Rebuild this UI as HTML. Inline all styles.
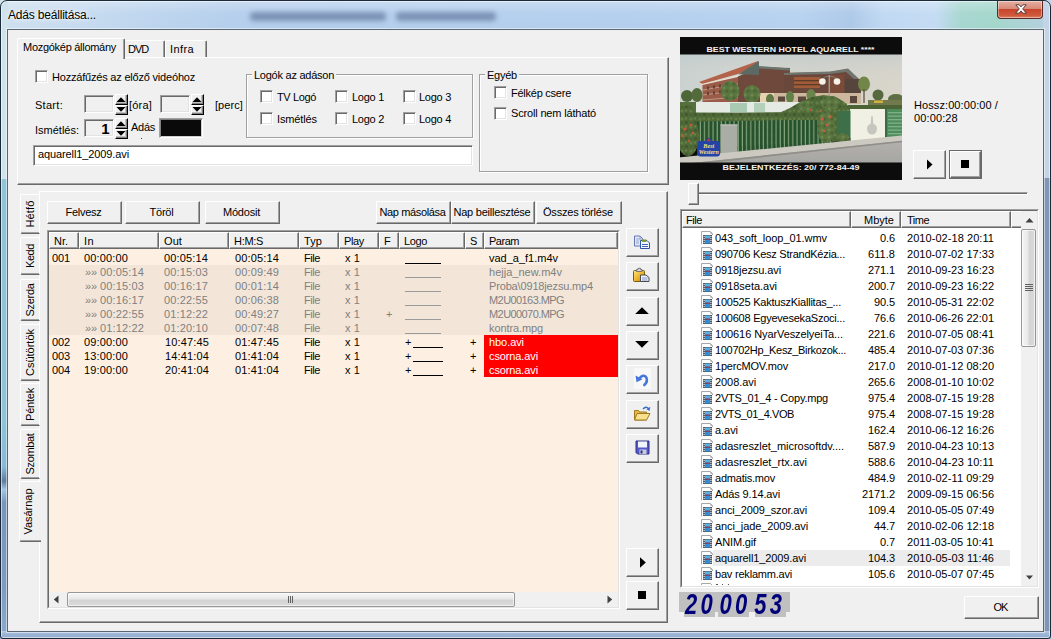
<!DOCTYPE html><html lang="hu"><head><meta charset="utf-8"><title>Adás beállitása...</title><style>
html,body{margin:0;padding:0}
body{width:1051px;height:639px;position:relative;overflow:hidden;background:#3a5a40;font-family:"Liberation Sans",sans-serif;font-size:11px;color:#000}
body *{position:absolute;box-sizing:border-box}
.t{white-space:nowrap;line-height:13px;height:13px}
.g{color:#808080}
.w{color:#fff}
.btn{background:#f0f0f0;border:1px solid;border-color:#fff #696969 #696969 #fff;box-shadow:inset -1px -1px 0 #a0a0a0;text-align:center;white-space:nowrap;overflow:hidden;padding-right:2px}
.chk{width:13px;height:13px;background:#fff;border:1px solid;border-color:#a0a0a0 #fff #fff #a0a0a0;box-shadow:inset 1px 1px 0 #696969, inset -1px -1px 0 #e3e3e3}
.edit{background:#f0f0f0;border:1px solid;border-color:#a0a0a0 #fff #fff #a0a0a0;box-shadow:inset 1px 1px 0 #696969,inset -1px -1px 0 #e3e3e3}
.grp{border:1px solid #a0a0a0;box-shadow:1px 1px 0 #fff, inset 1px 1px 0 #fff}
.leg{background:#f0f0f0;padding:0 2px;line-height:13px;height:13px;white-space:nowrap}
.hdr{background:#f0f0f0;border:1px solid;border-color:#fff #696969 #696969 #fff;box-shadow:inset -1px -1px 0 #a0a0a0;height:17px;line-height:16px;padding-left:4px;white-space:nowrap;overflow:hidden}
.sunk{border:1px solid;border-color:#a0a0a0 #fff #fff #a0a0a0}
.sunk>.in{left:0;top:0;right:0;bottom:0;border:1px solid;border-color:#696969 #e3e3e3 #e3e3e3 #696969}
</style></head><body>
<div class="" style="left:0px;top:0px;width:1051px;height:30px;background:linear-gradient(90deg,#cde0ee 0,#c8dcf0 6%,#bdd5ee 14%,#b4ceec 22%,#b3ceed 60%,#b6d1ef 76%,#adc8e8 81%,#bfd8f2 84%,#c3dbf3 89%,#a6d6cf 91.5%,#a3d6cb 94.6%,#b5cfe0 100%)"></div>
<div class="" style="left:0px;top:0px;width:1051px;height:30px;background:linear-gradient(180deg,rgba(255,255,255,.30) 0,rgba(255,255,255,.04) 45%,rgba(255,255,255,0) 100%)"></div>
<div class="" style="left:250px;top:12px;width:136px;height:9px;background:rgba(66,88,128,.5);filter:blur(2.5px);border-radius:4px"></div>
<div class="" style="left:396px;top:12px;width:100px;height:9px;background:rgba(66,88,128,.5);filter:blur(2.5px);border-radius:4px"></div>
<div class="" style="left:0px;top:0px;width:8px;height:639px;background:linear-gradient(180deg,#cfe3ec 0,#cfe3ec 28%,#8fc3d5 28.1%,#8fc3d5 66%,#8ab8d8 73%,#5f7c9c 75.3%,#a4c4e2 76.6%,#7896bc 78.6%,#7e9cc2 92%,#8caacc 100%)"></div>
<div class="" style="left:1043px;top:0px;width:8px;height:639px;background:linear-gradient(180deg,#c5d3e6 0,#c5d3e6 27.8%,#8096b4 27.9%,#8096b4 100%)"></div>
<div class="" style="left:0px;top:631px;width:1051px;height:8px;background:linear-gradient(180deg,#b8cce4 0,#9cb6d6 35%,#8eaace 100%)"></div>
<div class="" style="left:0px;top:0px;width:1051px;height:639px;border:1px solid #1b2a38;border-radius:7px 7px 3px 3px;box-shadow:inset 0 0 0 1px rgba(255,255,255,.55)"></div>
<div class="" style="left:7px;top:29px;width:1037px;height:603px;background:#f0f0f0;border:1px solid #5a6672;box-shadow:0 0 0 1px rgba(255,255,255,.5)"></div>
<span class="t" style="left:8px;top:8px;font-size:12px;line-height:15px;height:15px;text-shadow:0 0 6px #fff,0 0 3px #fff;letter-spacing:-0.19px">Adás beállitása...</span>
<div style="left:997px;top:1px;width:46px;height:18px;border:1px solid #5b2a26;border-top:none;border-radius:0 0 4px 4px;background:linear-gradient(180deg,#e8b0a4 0,#d68a78 45%,#c8442a 50%,#cf5a3c 85%,#dc8468 100%);box-shadow:inset 0 0 0 1px rgba(255,255,255,.4)"><svg style="left:17px;top:3px" width="12" height="10" viewBox="0 0 12 10"><path d="M0.8 0.8h3.4l1.8 2.1 1.8-2.1h3.4l-3.5 4.1 3.7 4.3h-3.5l-1.9-2.3-1.9 2.3h-3.5l3.7-4.3z" fill="#fff" stroke="#4a3030" stroke-width="0.9" stroke-linejoin="round"/></svg></div>
<div class="" style="left:17px;top:57px;width:652px;height:128px;border:1px solid;border-color:#fff #696969 #696969 #fff;box-shadow:inset -1px -1px 0 #a0a0a0"></div>
<div class="" style="left:124px;top:40px;width:41px;height:18px;border:1px solid;border-color:#fff #696969 transparent #fff;border-radius:2px 2px 0 0;box-shadow:inset -1px 0 0 #a0a0a0"></div>
<div class="" style="left:165px;top:40px;width:42px;height:18px;border:1px solid;border-color:#fff #696969 transparent #fff;border-radius:2px 2px 0 0;box-shadow:inset -1px 0 0 #a0a0a0"></div>
<div class="" style="left:124px;top:57px;width:83px;height:1px;background:#fff"></div>
<div class="" style="left:17px;top:38px;width:108px;height:21px;background:#f0f0f0;border:1px solid;border-color:#fff #696969 #f0f0f0 #fff;border-bottom:none;border-radius:2px 2px 0 0;box-shadow:inset -1px 0 0 #a0a0a0"></div>
<span class="t " style="left:23px;top:41px;letter-spacing:-0.284px;">Mozgókép állomány</span>
<span class="t " style="left:128px;top:43px;letter-spacing:-0.975px;">DVD</span>
<span class="t " style="left:170px;top:43px;letter-spacing:0.398px;">Infra</span>
<div class="chk" style="left:35px;top:70px"></div>
<span class="t " style="left:52px;top:71px;letter-spacing:-0.199px;">Hozzáfűzés az előző videóhoz</span>
<span class="t " style="left:35px;top:99px;letter-spacing:0.286px;">Start:</span>
<span class="t " style="left:35px;top:124px;letter-spacing:-0.001px;">Ismétlés:</span>
<div class="edit" style="left:84px;top:95px;width:30px;height:18px;"></div>
<div style="left:115px;top:94px;width:13px;height:11px;background:#f0f0f0;border:1px solid;border-color:#fff #000 #000 #fff;box-shadow:inset -1px -1px 0 #808080,inset -2px -2px 0 #c0c0c0"></div>
<svg style="left:116px;top:97px" width="10" height="5" viewBox="0 0 10 5"><path d="M0.5 5L5 0.3L9.5 5z" fill="#000"/></svg>
<div style="left:115px;top:105px;width:13px;height:10px;background:#f0f0f0;border:1px solid;border-color:#fff #000 #000 #fff;box-shadow:inset -1px -1px 0 #808080,inset -2px -2px 0 #c0c0c0"></div>
<svg style="left:116px;top:107px" width="10" height="5" viewBox="0 0 10 5"><path d="M0.5 0L5 4.7L9.5 0z" fill="#000"/></svg>
<span class="t " style="left:129px;top:99px;letter-spacing:0.198px;">[óra]</span>
<div class="edit" style="left:160px;top:95px;width:30px;height:18px;"></div>
<div style="left:191px;top:94px;width:13px;height:11px;background:#f0f0f0;border:1px solid;border-color:#fff #000 #000 #fff;box-shadow:inset -1px -1px 0 #808080,inset -2px -2px 0 #c0c0c0"></div>
<svg style="left:192px;top:97px" width="10" height="5" viewBox="0 0 10 5"><path d="M0.5 5L5 0.3L9.5 5z" fill="#000"/></svg>
<div style="left:191px;top:105px;width:13px;height:10px;background:#f0f0f0;border:1px solid;border-color:#fff #000 #000 #fff;box-shadow:inset -1px -1px 0 #808080,inset -2px -2px 0 #c0c0c0"></div>
<svg style="left:192px;top:107px" width="10" height="5" viewBox="0 0 10 5"><path d="M0.5 0L5 4.7L9.5 0z" fill="#000"/></svg>
<span class="t " style="left:215px;top:99px;letter-spacing:0.048px;">[perc]</span>
<div class="edit" style="left:84px;top:119px;width:30px;height:18px;"></div>
<span class="t" style="left:84px;top:120px;width:25.5px;text-align:right;font-weight:bold;font-size:15px;line-height:17px;height:17px">1</span>
<div style="left:115px;top:118px;width:13px;height:11px;background:#f0f0f0;border:1px solid;border-color:#fff #000 #000 #fff;box-shadow:inset -1px -1px 0 #808080,inset -2px -2px 0 #c0c0c0"></div>
<svg style="left:116px;top:121px" width="10" height="5" viewBox="0 0 10 5"><path d="M0.5 5L5 0.3L9.5 5z" fill="#000"/></svg>
<div style="left:115px;top:129px;width:13px;height:10px;background:#f0f0f0;border:1px solid;border-color:#fff #000 #000 #fff;box-shadow:inset -1px -1px 0 #808080,inset -2px -2px 0 #c0c0c0"></div>
<svg style="left:116px;top:131px" width="10" height="5" viewBox="0 0 10 5"><path d="M0.5 0L5 4.7L9.5 0z" fill="#000"/></svg>
<span class="t " style="left:131px;top:121px;letter-spacing:-0.268px;">Adás</span>
<div class="" style="left:141px;top:138px;width:1px;height:1px;background:#404040"></div>
<div class="" style="left:159px;top:118px;width:44px;height:20px;background:#0a0a0a;border:1px solid;border-color:#a0a0a0 #fff #fff #a0a0a0;box-shadow:inset 1px 1px 0 #808080,inset -1px -1px 0 #d0d0d0"></div>
<div class="edit" style="left:33px;top:145px;width:440px;height:21px;background:#fff"></div>
<span class="t " style="left:38px;top:148px;letter-spacing:-0.109px;">aquarell1_2009.avi</span>
<div class="grp" style="left:246px;top:74px;width:227px;height:64px;"></div>
<span class="leg" style="left:252px;top:69px;letter-spacing:-0.252px;">Logók az adáson</span>
<div class="chk" style="left:260px;top:90px"></div>
<div class="chk" style="left:260px;top:112px"></div>
<span class="t " style="left:277px;top:91px;letter-spacing:-0.369px;">TV Logó</span>
<span class="t " style="left:277px;top:113px;letter-spacing:-0.119px;">Ismétlés</span>
<div class="chk" style="left:335px;top:90px"></div>
<div class="chk" style="left:335px;top:112px"></div>
<span class="t " style="left:352px;top:91px;letter-spacing:-0.274px;">Logo 1</span>
<span class="t " style="left:352px;top:113px;letter-spacing:-0.274px;">Logo 2</span>
<div class="chk" style="left:403px;top:90px"></div>
<div class="chk" style="left:403px;top:112px"></div>
<span class="t " style="left:419px;top:91px;letter-spacing:-0.274px;">Logo 3</span>
<span class="t " style="left:419px;top:113px;letter-spacing:-0.274px;">Logo 4</span>
<div class="grp" style="left:479px;top:74px;width:169px;height:98px;"></div>
<span class="leg" style="left:485px;top:69px;letter-spacing:-0.238px;">Egyéb</span>
<div class="chk" style="left:494px;top:86px"></div>
<div class="chk" style="left:494px;top:107px"></div>
<span class="t " style="left:511px;top:87px;letter-spacing:-0.247px;">Félkép csere</span>
<span class="t " style="left:511px;top:107px;letter-spacing:-0.169px;">Scroll nem látható</span>
<svg style="left:680px;top:37px" width="222" height="143" viewBox="0 0 222 143">
<defs>
<filter id="bl" x="-5%" y="-5%" width="110%" height="110%"><feGaussianBlur stdDeviation="0.55"/></filter>
<filter id="bl2" x="-10%" y="-10%" width="120%" height="120%"><feGaussianBlur stdDeviation="1.1"/></filter>
<linearGradient id="sky" x1="0" y1="0" x2="1" y2="0"><stop offset="0" stop-color="#c9d1d0"/><stop offset="0.3" stop-color="#d3d6d0"/><stop offset="0.6" stop-color="#d2d3cb"/><stop offset="1" stop-color="#d9d5ca"/></linearGradient>
<linearGradient id="skv" x1="0" y1="0" x2="0" y2="1"><stop offset="0" stop-color="#b9c6cc" stop-opacity=".55"/><stop offset="0.5" stop-color="#d8d8d0" stop-opacity="0"/><stop offset="1" stop-color="#e0d8c8" stop-opacity=".5"/></linearGradient>
<linearGradient id="road" x1="0" y1="0" x2="0" y2="1"><stop offset="0" stop-color="#b4b3ae"/><stop offset="1" stop-color="#a4a4a2"/></linearGradient>
<clipPath id="vc"><rect x="0" y="17.5" width="222" height="108"/></clipPath>
<pattern id="pk" x="0" y="0" width="4.2" height="40" patternUnits="userSpaceOnUse"><rect x="0" y="0" width="3.1" height="40" fill="#26522e"/><rect x="3.1" y="0" width="1.1" height="40" fill="#86a67e"/></pattern>
<pattern id="lv" x="0" y="0" width="9" height="8" patternUnits="userSpaceOnUse"><rect width="9" height="8" fill="#506a38"/><circle cx="2" cy="2" r="1.6" fill="#627e44"/><circle cx="6.5" cy="5.5" r="1.8" fill="#425a2e"/><circle cx="6" cy="1.5" r="1.1" fill="#6a864a"/><circle cx="2" cy="6" r="1.2" fill="#486232"/></pattern>
<pattern id="lv2" x="0" y="0" width="7" height="7" patternUnits="userSpaceOnUse"><rect width="7" height="7" fill="#5a7440"/><circle cx="2" cy="2" r="1.5" fill="#6c884e"/><circle cx="5" cy="5" r="1.6" fill="#4c6636"/></pattern>
</defs>
<rect width="222" height="143" fill="#0c0c0c"/>
<g clip-path="url(#vc)">
<g filter="url(#bl)">
<rect x="-2" y="16" width="226" height="62" fill="url(#sky)"/>
<rect x="-2" y="16" width="226" height="62" fill="url(#skv)"/>
<!-- hotel: right blocks -->
<path d="M57 40L79 30L110 31L110 67L57 67z" fill="#6f4a3c"/>
<path d="M79 29L110 31.5L110 33.5L79 31.5z" fill="#6c7670"/>
<path d="M104 36L150 35L168 32L181 44L181 67L104 67z" fill="#6a463a"/>
<path d="M104 36L150 34.5L168 31.5L181 44L176 44L166 35L150 37L104 38z" fill="#6f756e"/>
<rect x="114" y="40" width="26" height="11" fill="#a05c38"/>
<rect x="114" y="43" width="26" height="1.3" fill="#5c3a2c"/><rect x="114" y="47" width="26" height="1.3" fill="#5c3a2c"/>
<rect x="150" y="38" width="14" height="20" fill="#7a4c38"/>
<rect x="165" y="42" width="15" height="24" fill="#54443c"/>
<!-- hotel: left wing w/ red roof -->
<path d="M19 45L78 24L79 29L58 37L22 47z" fill="#b4644c"/>
<path d="M58.500 37.300L79 24L79 38z" fill="#5c6a64"/>
<path d="M19 45L22 47L58 38.500L58 40L22 48.500z" fill="#e8e0d0"/>
<path d="M22.500 48L58 40L58 67L22.500 67z" fill="#9a5c48"/>
<g stroke="#d8c0a8" stroke-width=".8" opacity=".75"><path d="M23 53L58 47"/><path d="M23 58L58 53.500"/><path d="M23 63L58 60"/></g>
<g fill="#4c2e28" opacity=".7"><rect x="27" y="49.500" width="2" height="3"/><rect x="33" y="48.500" width="2" height="3"/><rect x="39" y="47.500" width="2" height="3"/><rect x="45" y="46.500" width="2" height="3"/><rect x="51" y="45.500" width="2" height="3"/><rect x="27" y="55" width="2" height="3"/><rect x="33" y="54.500" width="2" height="3"/><rect x="39" y="53.500" width="2" height="3"/><rect x="45" y="53" width="2" height="3"/><rect x="51" y="52" width="2" height="3"/></g>
<!-- cream ground floor -->
<rect x="80" y="56" width="101" height="11" fill="#cdb89e"/>
<g fill="#5a463a"><rect x="98" y="59.500" width="7" height="5"/><rect x="118" y="59.500" width="8" height="6"/><rect x="132" y="59.500" width="8" height="6"/><rect x="147" y="59.500" width="8" height="6"/><rect x="170" y="59" width="7" height="7"/></g>
<rect x="80" y="56" width="14" height="9" fill="#e6d2b0"/>
<!-- lamp -->
<rect x="148.600" y="38" width="1.300" height="23" fill="#a4a49e"/>
<path d="M142.500 42Q149 36 157 42" fill="none" stroke="#8a8a84" stroke-width=".8"/>
<circle cx="142.400" cy="44.500" r="3.300" fill="#f6f2e8"/><circle cx="157" cy="44.500" r="3.300" fill="#f6f2e8"/>
<!-- far right trees & things -->
<ellipse cx="198" cy="58" rx="5.500" ry="5.500" fill="#56683e"/>
<ellipse cx="216" cy="62" rx="8" ry="5" fill="#5e6e44"/>
<rect x="188" y="63" width="36" height="5" fill="#6f7a4e"/>
<rect x="194" y="63.500" width="9" height="2.500" fill="#d0b040"/>
<ellipse cx="184" cy="47" rx="6" ry="7.500" fill="#72864a"/><rect x="183.400" y="52" width="1.200" height="14" fill="#5a4a38"/>
<!-- trees before building -->
<ellipse cx="7" cy="59" rx="6" ry="6" fill="#4e6638"/>
<ellipse cx="17" cy="58" rx="5.500" ry="7" fill="#536b3a"/>
<ellipse cx="50" cy="54" rx="9.500" ry="10" fill="url(#lv2)"/>
<ellipse cx="72" cy="57" rx="8.500" ry="9" fill="url(#lv2)"/>
<ellipse cx="90" cy="62" rx="4" ry="5" fill="#5f7844"/>
<ellipse cx="110" cy="60" rx="4" ry="6" fill="#64804a"/>
<ellipse cx="131" cy="58" rx="4.500" ry="6" fill="#6a844c"/>
<!-- white wall w/ glass -->
<rect x="16" y="65" width="150" height="10.500" fill="#e6eae4"/>
<rect x="50" y="66" width="17" height="9.500" fill="#a9c9b2"/>
<rect x="74" y="66" width="11" height="9.500" fill="#b4d0ba"/>
<rect x="-2" y="65" width="18" height="12" fill="#56703c"/>
<!-- hedge over wall -->
<path d="M-2 70L10 68L16 75.500L60 76L100 75.500L110 71L120 65L132 60L144 58L156 60L166 66L170 72L170 104L-2 112z" fill="url(#lv)"/>
<ellipse cx="150" cy="66" rx="10" ry="7" fill="url(#lv2)"/>
<ellipse cx="126" cy="69" rx="8" ry="5" fill="url(#lv2)"/>
<!-- flowers -->
<g fill="#c0583a"><circle cx="5" cy="92" r="1.800"/><circle cx="11" cy="88" r="1.500"/><circle cx="3" cy="97" r="1.400"/><circle cx="13" cy="95" r="1.300"/><circle cx="77" cy="78" r="1.500"/><circle cx="142" cy="80" r="1.700"/><circle cx="146" cy="86" r="1.500"/><circle cx="151" cy="79" r="1.400"/><circle cx="140" cy="75" r="1.300"/><circle cx="149" cy="92" r="1.300"/><circle cx="131" cy="73" r="1.200"/></g>
<!-- fence -->
<path d="M17 84L152 82L152 109L17 121z" fill="url(#pk)"/>
<path d="M17 76L152 75L152 82.500L17 84.500z" fill="url(#lv)"/>
<ellipse cx="8" cy="99" rx="11" ry="20" fill="url(#lv)"/>
<g fill="#c0583a"><circle cx="5" cy="92" r="1.800"/><circle cx="11" cy="88" r="1.500"/><circle cx="3" cy="99" r="1.400"/><circle cx="13" cy="96" r="1.300"/><circle cx="9" cy="104" r="1.200"/></g>
<ellipse cx="146" cy="90" rx="9" ry="16" fill="url(#lv2)"/>
<g fill="#c8603c"><circle cx="142" cy="82" r="1.700"/><circle cx="147" cy="88" r="1.500"/><circle cx="150" cy="80" r="1.400"/><circle cx="144" cy="94" r="1.300"/></g>
<!-- grey box -->
<rect x="40.500" y="87.500" width="17" height="30" fill="#a9ada5"/>
<rect x="40.500" y="87.500" width="17" height="1" fill="#c4c8c0"/>
<!-- right: glass panel, white wall, gate -->
<rect x="158" y="74" width="13" height="27" fill="#3c7049"/>
<rect x="170.500" y="72" width="34.500" height="33" fill="#f0f0e5"/>
<ellipse cx="192" cy="92" rx="5" ry="5.600" fill="#c6c6be"/><path d="M191.300 79h1.400l.6 8h-2.600z" fill="#c6c6be"/>
<rect x="205" y="71.500" width="19" height="31" fill="#4f8c5c"/>
<g fill="#7fb088"><rect x="208" y="75" width="14" height="1.300"/><rect x="208" y="78.500" width="14" height="1.300"/><rect x="208" y="82" width="14" height="1.300"/><rect x="208" y="85.500" width="14" height="1.300"/><rect x="208" y="89" width="14" height="1.300"/><rect x="208" y="92.500" width="14" height="1.300"/><rect x="208" y="96" width="14" height="1.300"/></g>
<rect x="205" y="71.500" width="2" height="31" fill="#3a6c46"/>
<rect x="168" y="68" width="56" height="4" fill="#4c6436"/>
<ellipse cx="163" cy="101" rx="6" ry="5" fill="url(#lv2)"/>
<!-- road / curb -->
<path d="M-2 124L224 100L224 130L-2 130z" fill="url(#road)"/>
<path d="M-2 120.500L224 98.200L224 103.500L-2 127.500z" fill="#cbc9c0"/>
<path d="M-2 127.500L224 103.500L224 105L-2 129.500z" fill="#8f8e88"/>
</g>
<!-- Best Western logo -->
<g>
<path d="M17.500 107Q17.500 104 20.500 104L25 104L28.700 100.500L32.500 104L37 104Q40 104 40 107L40 116.500Q40 119.500 37 119.500L20.500 119.500Q17.500 119.500 17.500 116.500z" fill="#2343a6"/>
<path d="M26.500 104.200L28.700 101.500L31 104.200z" fill="#c83848"/>
<text x="28.800" y="111.300" text-anchor="middle" font-family="Liberation Serif, serif" font-weight="bold" font-style="italic" font-size="6.200" fill="#f6e27c">Best</text>
<text x="28.800" y="117.300" text-anchor="middle" font-family="Liberation Serif, serif" font-weight="bold" font-style="italic" font-size="6" fill="#f6e27c" textLength="20" lengthAdjust="spacingAndGlyphs">Western</text>
</g>
</g>
<text x="110.500" y="14.800" text-anchor="middle" font-family="Liberation Sans, sans-serif" font-weight="bold" font-size="6.400" fill="#f2f2f2" textLength="168" lengthAdjust="spacingAndGlyphs">BEST WESTERN HOTEL AQUARELL ****</text>
<text x="111" y="133.300" text-anchor="middle" font-family="Liberation Sans, sans-serif" font-weight="bold" font-size="6.800" fill="#f2f2f2" textLength="137" lengthAdjust="spacingAndGlyphs">BEJELENTKEZÉS: 20/ 772-84-49</text>
</svg>
<span class="t " style="left:914px;top:99px;letter-spacing:0.091px;">Hossz:00:00:00 /</span>
<span class="t " style="left:914px;top:112px;letter-spacing:0.123px;">00:00:28</span>
<div class="btn" style="left:913px;top:150px;width:33px;height:29px;line-height:26px;"><svg style="left:12px;top:8px" width="8" height="11" viewBox="0 0 8 11"><path d="M1 0.5L6.5 5.5L1 10.5z" fill="#000"/></svg></div>
<div class="" style="left:949px;top:150px;width:33px;height:29px;border:1px solid #696969"></div>
<div class="btn" style="left:950px;top:151px;width:31px;height:27px;line-height:24px;"><svg style="left:10px;top:8px" width="8" height="8" viewBox="0 0 8 8"><rect width="8" height="8" fill="#000"/></svg></div>
<div class="" style="left:693px;top:192px;width:335px;height:3px;border:1px solid;border-color:#a0a0a0 #fff #fff #a0a0a0;background:#696969;height:3px"></div>
<div class="btn" style="left:688px;top:183px;width:11px;height:22px;"></div>
<div class="" style="left:39px;top:191px;width:629px;height:432px;border:1px solid;border-color:#fff #696969 #696969 #fff;box-shadow:inset -1px -1px 0 #a0a0a0"></div>
<div class="" style="left:20px;top:194px;width:20px;height:40px;border:1px solid;border-color:#fff transparent #696969 #fff;border-radius:2px 0 0 2px;box-shadow:inset 0 -1px 0 #a0a0a0"></div>
<span class="t" style="left:24px;top:234px;width:40px;text-align:center;transform-origin:0 0;transform:rotate(-90deg);letter-spacing:0.142px;">Hétfő</span>
<div class="" style="left:20px;top:237px;width:20px;height:38px;border:1px solid;border-color:#fff transparent #696969 #fff;border-radius:2px 0 0 2px;box-shadow:inset 0 -1px 0 #a0a0a0"></div>
<span class="t" style="left:24px;top:275px;width:38px;text-align:center;transform-origin:0 0;transform:rotate(-90deg);letter-spacing:-0.422px;">Kedd</span>
<div class="" style="left:20px;top:279px;width:20px;height:42px;border:1px solid;border-color:#fff transparent #696969 #fff;border-radius:2px 0 0 2px;box-shadow:inset 0 -1px 0 #a0a0a0"></div>
<span class="t" style="left:24px;top:321px;width:42px;text-align:center;transform-origin:0 0;transform:rotate(-90deg);letter-spacing:-0.309px;">Szerda</span>
<div class="" style="left:20px;top:324px;width:20px;height:57px;border:1px solid;border-color:#fff transparent #696969 #fff;border-radius:2px 0 0 2px;box-shadow:inset 0 -1px 0 #a0a0a0"></div>
<span class="t" style="left:24px;top:381px;width:57px;text-align:center;transform-origin:0 0;transform:rotate(-90deg);letter-spacing:-0.008px;">Csütörtök</span>
<div class="" style="left:20px;top:383px;width:20px;height:43px;border:1px solid;border-color:#fff transparent #696969 #fff;border-radius:2px 0 0 2px;box-shadow:inset 0 -1px 0 #a0a0a0"></div>
<span class="t" style="left:24px;top:426px;width:43px;text-align:center;transform-origin:0 0;transform:rotate(-90deg);letter-spacing:-0.208px;">Péntek</span>
<div class="" style="left:20px;top:429px;width:20px;height:50px;border:1px solid;border-color:#fff transparent #696969 #fff;border-radius:2px 0 0 2px;box-shadow:inset 0 -1px 0 #a0a0a0"></div>
<span class="t" style="left:24px;top:479px;width:50px;text-align:center;transform-origin:0 0;transform:rotate(-90deg);letter-spacing:-0.344px;">Szombat</span>
<div class="" style="left:19px;top:481px;width:22px;height:61px;background:#f0f0f0;border:1px solid;border-color:#fff #f0f0f0 #696969 #fff;border-right:none;border-radius:2px 0 0 2px;box-shadow:inset 0 -1px 0 #a0a0a0"></div>
<span class="t" style="left:22px;top:542px;width:61px;text-align:center;transform-origin:0 0;transform:rotate(-90deg);letter-spacing:-0.034px;">Vasárnap</span>
<div class="btn" style="left:47px;top:201px;width:75px;height:23px;line-height:20px;letter-spacing:-0.271px;">Felvesz</div>
<div class="btn" style="left:125px;top:201px;width:75px;height:23px;line-height:20px;letter-spacing:-0.212px;">Töröl</div>
<div class="btn" style="left:205px;top:201px;width:75px;height:23px;line-height:20px;letter-spacing:-0.216px;">Módosit</div>
<div class="btn" style="left:376px;top:201px;width:75px;height:23px;line-height:20px;letter-spacing:-0.359px;">Nap másolása</div>
<div class="btn" style="left:451px;top:201px;width:84px;height:23px;line-height:20px;letter-spacing:-0.232px;">Nap beillesztése</div>
<div class="btn" style="left:536px;top:201px;width:86px;height:23px;line-height:20px;letter-spacing:-0.196px;">Összes törlése</div>
<div class="sunk" style="left:47px;top:230px;width:573px;height:379px;background:#fdf0e2"><div class="in"></div></div>
<div class="hdr" style="left:49px;top:232px;width:30px;letter-spacing:-0.019px;">Nr.</div>
<div class="hdr" style="left:79px;top:232px;width:80px;letter-spacing:0.413px;">In</div>
<div class="hdr" style="left:159px;top:232px;width:70px;letter-spacing:0.090px;">Out</div>
<div class="hdr" style="left:229px;top:232px;width:70px;letter-spacing:-0.311px;">H:M:S</div>
<div class="hdr" style="left:299px;top:232px;width:40px;letter-spacing:0.090px;">Typ</div>
<div class="hdr" style="left:339px;top:232px;width:40px;letter-spacing:-0.350px;">Play</div>
<div class="hdr" style="left:379px;top:232px;width:20px;letter-spacing:-0.719px;">F</div>
<div class="hdr" style="left:399px;top:232px;width:66px;letter-spacing:-0.367px;">Logo</div>
<div class="hdr" style="left:465px;top:232px;width:19px;letter-spacing:-1.337px;">S</div>
<div class="hdr" style="left:484px;top:232px;width:134px;letter-spacing:-0.479px;">Param</div>
<div class="" style="left:49px;top:265px;width:569px;height:70px;background:#f3e6d9"></div>
<div class="" style="left:484px;top:335px;width:134px;height:42px;background:#ff0000"></div>
<span class="t " style="left:52px;top:252px;letter-spacing:-0.117px;">001</span>
<span class="t " style="left:84px;top:252px;letter-spacing:0.148px;">00:00:00</span>
<span class="t " style="left:164px;top:252px;letter-spacing:0.148px;">00:05:14</span>
<span class="t " style="left:235px;top:252px;letter-spacing:0.148px;">00:05:14</span>
<span class="t " style="left:304px;top:252px;letter-spacing:-0.431px;">File</span>
<span class="t " style="left:345px;top:252px;letter-spacing:0.109px;">x 1</span>
<div class="" style="left:405px;top:263px;width:36px;height:1px;background:#000"></div>
<span class="t " style="left:489px;top:252px;letter-spacing:-0.008px;">vad_a_f1.m4v</span>
<span class="t g" style="left:85px;top:266px;font-size:11px;letter-spacing:0px">&raquo;&raquo;</span>
<span class="t g" style="left:100px;top:266px;letter-spacing:0.148px;">00:05:14</span>
<span class="t g" style="left:164px;top:266px;letter-spacing:0.148px;">00:15:03</span>
<span class="t g" style="left:235px;top:266px;letter-spacing:0.148px;">00:09:49</span>
<span class="t g" style="left:304px;top:266px;letter-spacing:-0.431px;">File</span>
<span class="t g" style="left:345px;top:266px;letter-spacing:0.109px;">x 1</span>
<div class="" style="left:405px;top:277px;width:36px;height:1px;background:#9a9a9a"></div>
<span class="t g" style="left:489px;top:266px;letter-spacing:0.018px;">hejja_new.m4v</span>
<span class="t g" style="left:85px;top:280px;font-size:11px;letter-spacing:0px">&raquo;&raquo;</span>
<span class="t g" style="left:100px;top:280px;letter-spacing:0.148px;">00:15:03</span>
<span class="t g" style="left:164px;top:280px;letter-spacing:0.148px;">00:16:17</span>
<span class="t g" style="left:235px;top:280px;letter-spacing:0.148px;">00:01:14</span>
<span class="t g" style="left:304px;top:280px;letter-spacing:-0.431px;">File</span>
<span class="t g" style="left:345px;top:280px;letter-spacing:0.109px;">x 1</span>
<div class="" style="left:405px;top:291px;width:36px;height:1px;background:#9a9a9a"></div>
<span class="t g" style="left:489px;top:280px;letter-spacing:-0.158px;">Proba\0918jezsu.mp4</span>
<span class="t g" style="left:85px;top:294px;font-size:11px;letter-spacing:0px">&raquo;&raquo;</span>
<span class="t g" style="left:100px;top:294px;letter-spacing:0.148px;">00:16:17</span>
<span class="t g" style="left:164px;top:294px;letter-spacing:0.148px;">00:22:55</span>
<span class="t g" style="left:235px;top:294px;letter-spacing:0.148px;">00:06:38</span>
<span class="t g" style="left:304px;top:294px;letter-spacing:-0.431px;">File</span>
<span class="t g" style="left:345px;top:294px;letter-spacing:0.109px;">x 1</span>
<div class="" style="left:405px;top:305px;width:36px;height:1px;background:#9a9a9a"></div>
<span class="t g" style="left:489px;top:294px;letter-spacing:-0.577px;">M2U00163.MPG</span>
<span class="t g" style="left:85px;top:308px;font-size:11px;letter-spacing:0px">&raquo;&raquo;</span>
<span class="t g" style="left:100px;top:308px;letter-spacing:0.148px;">00:22:55</span>
<span class="t g" style="left:164px;top:308px;letter-spacing:0.148px;">01:12:22</span>
<span class="t g" style="left:235px;top:308px;letter-spacing:0.148px;">00:49:27</span>
<span class="t g" style="left:304px;top:308px;letter-spacing:-0.431px;">File</span>
<span class="t g" style="left:345px;top:308px;letter-spacing:0.109px;">x 1</span>
<span class="t g" style="left:386px;top:308px;letter-spacing:1.577px;">+</span>
<div class="" style="left:405px;top:319px;width:36px;height:1px;background:#9a9a9a"></div>
<span class="t g" style="left:489px;top:308px;letter-spacing:-0.577px;">M2U00070.MPG</span>
<span class="t g" style="left:85px;top:322px;font-size:11px;letter-spacing:0px">&raquo;&raquo;</span>
<span class="t g" style="left:100px;top:322px;letter-spacing:0.148px;">01:12:22</span>
<span class="t g" style="left:164px;top:322px;letter-spacing:0.148px;">01:20:10</span>
<span class="t g" style="left:235px;top:322px;letter-spacing:0.148px;">00:07:48</span>
<span class="t g" style="left:304px;top:322px;letter-spacing:-0.431px;">File</span>
<span class="t g" style="left:345px;top:322px;letter-spacing:0.109px;">x 1</span>
<div class="" style="left:405px;top:333px;width:36px;height:1px;background:#9a9a9a"></div>
<span class="t g" style="left:489px;top:322px;letter-spacing:-0.102px;">kontra.mpg</span>
<span class="t " style="left:52px;top:336px;letter-spacing:-0.117px;">002</span>
<span class="t " style="left:84px;top:336px;letter-spacing:0.148px;">09:00:00</span>
<span class="t " style="left:165px;top:336px;letter-spacing:0.148px;">10:47:45</span>
<span class="t " style="left:235px;top:336px;letter-spacing:0.148px;">01:47:45</span>
<span class="t " style="left:304px;top:336px;letter-spacing:-0.431px;">File</span>
<span class="t " style="left:345px;top:336px;letter-spacing:0.109px;">x 1</span>
<span class="t " style="left:405px;top:336px;letter-spacing:1.577px;">+</span>
<div class="" style="left:413px;top:347px;width:30px;height:1px;background:#000"></div>
<span class="t " style="left:470px;top:336px;letter-spacing:1.577px;">+</span>
<span class="t w" style="left:489px;top:336px;letter-spacing:-0.067px;">hbo.avi</span>
<span class="t " style="left:52px;top:350px;letter-spacing:-0.117px;">003</span>
<span class="t " style="left:84px;top:350px;letter-spacing:0.148px;">13:00:00</span>
<span class="t " style="left:165px;top:350px;letter-spacing:0.148px;">14:41:04</span>
<span class="t " style="left:235px;top:350px;letter-spacing:0.148px;">01:41:04</span>
<span class="t " style="left:304px;top:350px;letter-spacing:-0.431px;">File</span>
<span class="t " style="left:345px;top:350px;letter-spacing:0.109px;">x 1</span>
<span class="t " style="left:405px;top:350px;letter-spacing:1.577px;">+</span>
<div class="" style="left:413px;top:361px;width:30px;height:1px;background:#000"></div>
<span class="t " style="left:470px;top:350px;letter-spacing:1.577px;">+</span>
<span class="t w" style="left:489px;top:350px;letter-spacing:-0.113px;">csorna.avi</span>
<span class="t " style="left:52px;top:364px;letter-spacing:-0.117px;">004</span>
<span class="t " style="left:84px;top:364px;letter-spacing:0.148px;">19:00:00</span>
<span class="t " style="left:165px;top:364px;letter-spacing:0.148px;">20:41:04</span>
<span class="t " style="left:235px;top:364px;letter-spacing:0.148px;">01:41:04</span>
<span class="t " style="left:304px;top:364px;letter-spacing:-0.431px;">File</span>
<span class="t " style="left:345px;top:364px;letter-spacing:0.109px;">x 1</span>
<span class="t " style="left:405px;top:364px;letter-spacing:1.577px;">+</span>
<div class="" style="left:413px;top:375px;width:30px;height:1px;background:#000"></div>
<span class="t " style="left:470px;top:364px;letter-spacing:1.577px;">+</span>
<span class="t w" style="left:489px;top:364px;letter-spacing:-0.113px;">csorna.avi</span>
<div class="" style="left:49px;top:592px;width:569px;height:15px;background:#f0f0f0"></div>
<svg style="left:53px;top:595px" width="6" height="9" viewBox="0 0 6 9"><path d="M5.5 0.5L0.8 4.5L5.5 8.5z" fill="#404040"/></svg>
<svg style="left:607px;top:595px" width="6" height="9" viewBox="0 0 6 9"><path d="M0.5 0.5L5.2 4.5L0.5 8.5z" fill="#404040"/></svg>
<div class="" style="left:67px;top:592px;width:448px;height:15px;border:1px solid #979797;border-radius:2px;background:linear-gradient(180deg,#f6f6f6 0,#e8e8e8 45%,#d4d4d4 55%,#dadada 100%);box-shadow:inset 0 0 0 1px rgba(255,255,255,.6)"></div>
<div class="" style="left:288px;top:596px;width:1px;height:7px;background:#606060"></div>
<div class="" style="left:290px;top:596px;width:1px;height:7px;background:#606060"></div>
<div class="" style="left:292px;top:596px;width:1px;height:7px;background:#606060"></div>
<div class="btn" style="left:626px;top:228px;width:33px;height:29px;line-height:26px;"><svg style="left:-1px;top:-1px" width="33" height="29" viewBox="0 0 33 29"><path d="M8.5 8h5.5l3 3v7h-8.5z" fill="#e4e8f6" stroke="#6578b4"/><path d="M10 11h4M10 13h3M10 15h3" stroke="#8ea0d0" stroke-width=".9"/><path d="M14 8v3h3" fill="none" stroke="#7d8fc0" stroke-width=".8"/><path d="M14.5 12.5h6.5l2.500 2.500v5.500h-9z" fill="#f4f7ff" stroke="#2f52ac"/><rect x="16" y="11.500" width="4.500" height="2.500" fill="#7f9a3c"/><path d="M16 16.500h6M16 18.500h6" stroke="#3f66c4" stroke-width="1.100"/></svg></div>
<div class="btn" style="left:626px;top:262px;width:33px;height:29px;line-height:26px;"><svg style="left:-1px;top:-1px" width="33" height="29" viewBox="0 0 33 29"><defs><linearGradient id="gp" x1="0" y1="0" x2="1" y2="1"><stop offset="0" stop-color="#fbe58a"/><stop offset=".5" stop-color="#edb72c"/><stop offset="1" stop-color="#b98412"/></linearGradient></defs><rect x="7.500" y="8.500" width="11" height="11" rx="1" fill="url(#gp)" stroke="#7a5c14"/><path d="M10.500 9.500v-2h1.500v-1.200h2.500v1.200h1.500v2z" fill="#d9d9d9" stroke="#6a6a6a" stroke-width=".9"/><path d="M14.500 13h5.500l3 2.500v4h-8.500z" fill="#eef2fb" stroke="#4c4c4c"/><path d="M16 16h5.500M16 18h5.500" stroke="#7f95c8" stroke-width="1"/></svg></div>
<div class="btn" style="left:626px;top:297px;width:33px;height:29px;line-height:26px;"><svg style="left:8px;top:9px" width="14" height="7" viewBox="0 0 14 7"><path d="M0.2 7L7 0.2L13.8 7z" fill="#000"/></svg></div>
<div class="btn" style="left:626px;top:331px;width:33px;height:29px;line-height:26px;"><svg style="left:8px;top:9px" width="14" height="7" viewBox="0 0 14 7"><path d="M0.2 0L7 6.8L13.8 0z" fill="#000"/></svg></div>
<div class="btn" style="left:626px;top:365px;width:33px;height:29px;line-height:26px;"><svg style="left:-1px;top:-1px" width="33" height="29" viewBox="0 0 33 29"><rect x="8" y="3" width="17" height="21" fill="#f8f8f8"/><path d="M13 13.800Q17.500 8.500 20.300 12.500Q22.200 16.500 18.300 20" fill="none" stroke="#4477dd" stroke-width="2.600" stroke-linecap="round"/><path d="M9.500 10.500L10.500 17.200L16.500 14.200z" fill="#4477dd"/></svg></div>
<div class="btn" style="left:626px;top:400px;width:33px;height:29px;line-height:26px;"><svg style="left:-1px;top:-1px" width="33" height="29" viewBox="0 0 33 29"><path d="M8.500 10.500h4l1 1.500h7v8h-12z" fill="#e6bb4a" stroke="#a07a1e"/><path d="M8.500 20L11 13.500h13L20.500 20z" fill="#f9e08e" stroke="#a07a1e"/><path d="M17 9Q20 5.500 22.800 9" fill="none" stroke="#3a6cc8" stroke-width="1.400"/><path d="M24.300 6.800L23.500 11L20.500 9.200z" fill="#3a6cc8"/></svg></div>
<div class="btn" style="left:626px;top:434px;width:33px;height:29px;line-height:26px;"><svg style="left:-1px;top:-1px" width="33" height="29" viewBox="0 0 33 29"><path d="M10 7h13v13h-11.500l-1.500-1.500z" fill="#5558c8" stroke="#2d2f86"/><rect x="12" y="7.500" width="9" height="6" fill="#f2f4fc"/><rect x="13.500" y="15.500" width="7" height="4.500" fill="#c9cbdc"/><rect x="14.500" y="16.500" width="2" height="3" fill="#2d2f86"/></svg></div>
<div class="btn" style="left:626px;top:548px;width:33px;height:29px;line-height:26px;"><svg style="left:12px;top:8px" width="8" height="11" viewBox="0 0 8 11"><path d="M1 0.3L6.8 5.5L1 10.7z" fill="#000"/></svg></div>
<div class="btn" style="left:626px;top:581px;width:33px;height:29px;line-height:26px;"><svg style="left:11px;top:9px" width="8" height="8" viewBox="0 0 8 8"><rect width="8" height="8" fill="#000"/></svg></div>
<div class="sunk" style="left:680px;top:209px;width:359px;height:379px;background:#fff"><div class="in"></div></div>
<div class="hdr" style="left:682px;top:211px;width:169px;letter-spacing:-0.431px;padding-left:3px;">File</div>
<div class="hdr" style="left:851px;top:211px;width:50px;letter-spacing:0.009px;text-align:right;padding-right:6px;padding-left:0;">Mbyte</div>
<div class="hdr" style="left:901px;top:211px;width:110px;letter-spacing:-0.509px;padding-left:5px;">Time</div>
<div class="hdr" style="left:1011px;top:211px;width:13px"></div>
<div class="" style="left:713px;top:550px;width:297px;height:16px;background:#ececec"></div>
<svg style="left:700px;top:230px" width="16" height="16" viewBox="0 0 16 16"><path d="M1.5 14.500V1.500H10.500L12.500 3.500V5" fill="none" stroke="#a8a8a8"/><path d="M10.500 1.500V3.500H12.500" fill="none" stroke="#c0c0c0"/><rect x="3" y="5" width="9" height="9" fill="#4b5a68"/><rect x="5" y="5.600" width="5" height="3" fill="#54b4e8"/><rect x="5" y="8.600" width="5" height="1.300" fill="#8a3a6a"/><rect x="5" y="9.900" width="5" height="3.600" fill="#2e8fdc"/><path d="M3.600 6h1v1h-1zM3.600 8h1v1h-1zM3.600 10h1v1h-1zM3.600 12h1v1h-1zM10.400 6h1v1h-1zM10.400 8h1v1h-1zM10.400 10h1v1h-1zM10.400 12h1v1h-1z" fill="#fff"/></svg>
<span class="t " style="left:715px;top:232px;letter-spacing:-0.056px;">043_soft_loop_01.wmv</span>
<span class="t " style="left:851px;top:232px;width:44px;text-align:right;letter-spacing:-0.097px;">0.6</span>
<span class="t " style="left:907px;top:232px;letter-spacing:0.061px;">2010-02-18 20:11</span>
<svg style="left:700px;top:246px" width="16" height="16" viewBox="0 0 16 16"><path d="M1.5 14.500V1.500H10.500L12.500 3.500V5" fill="none" stroke="#a8a8a8"/><path d="M10.500 1.500V3.500H12.500" fill="none" stroke="#c0c0c0"/><rect x="3" y="5" width="9" height="9" fill="#4b5a68"/><rect x="5" y="5.600" width="5" height="3" fill="#54b4e8"/><rect x="5" y="8.600" width="5" height="1.300" fill="#8a3a6a"/><rect x="5" y="9.900" width="5" height="3.600" fill="#2e8fdc"/><path d="M3.600 6h1v1h-1zM3.600 8h1v1h-1zM3.600 10h1v1h-1zM3.600 12h1v1h-1zM10.400 6h1v1h-1zM10.400 8h1v1h-1zM10.400 10h1v1h-1zM10.400 12h1v1h-1z" fill="#fff"/></svg>
<span class="t " style="left:715px;top:248px;letter-spacing:-0.245px;">090706 Kesz StrandKézia...</span>
<span class="t " style="left:851px;top:248px;width:44px;text-align:right;letter-spacing:0.058px;">611.8</span>
<span class="t " style="left:907px;top:248px;letter-spacing:0.010px;">2010-07-02 17:33</span>
<svg style="left:700px;top:262px" width="16" height="16" viewBox="0 0 16 16"><path d="M1.5 14.500V1.500H10.500L12.500 3.500V5" fill="none" stroke="#a8a8a8"/><path d="M10.500 1.500V3.500H12.500" fill="none" stroke="#c0c0c0"/><rect x="3" y="5" width="9" height="9" fill="#4b5a68"/><rect x="5" y="5.600" width="5" height="3" fill="#54b4e8"/><rect x="5" y="8.600" width="5" height="1.300" fill="#8a3a6a"/><rect x="5" y="9.900" width="5" height="3.600" fill="#2e8fdc"/><path d="M3.600 6h1v1h-1zM3.600 8h1v1h-1zM3.600 10h1v1h-1zM3.600 12h1v1h-1zM10.400 6h1v1h-1zM10.400 8h1v1h-1zM10.400 10h1v1h-1zM10.400 12h1v1h-1z" fill="#fff"/></svg>
<span class="t " style="left:715px;top:264px;letter-spacing:-0.097px;">0918jezsu.avi</span>
<span class="t " style="left:851px;top:264px;width:44px;text-align:right;letter-spacing:-0.105px;">271.1</span>
<span class="t " style="left:907px;top:264px;letter-spacing:0.010px;">2010-09-23 16:23</span>
<svg style="left:700px;top:278px" width="16" height="16" viewBox="0 0 16 16"><path d="M1.5 14.500V1.500H10.500L12.500 3.500V5" fill="none" stroke="#a8a8a8"/><path d="M10.500 1.500V3.500H12.500" fill="none" stroke="#c0c0c0"/><rect x="3" y="5" width="9" height="9" fill="#4b5a68"/><rect x="5" y="5.600" width="5" height="3" fill="#54b4e8"/><rect x="5" y="8.600" width="5" height="1.300" fill="#8a3a6a"/><rect x="5" y="9.900" width="5" height="3.600" fill="#2e8fdc"/><path d="M3.600 6h1v1h-1zM3.600 8h1v1h-1zM3.600 10h1v1h-1zM3.600 12h1v1h-1zM10.400 6h1v1h-1zM10.400 8h1v1h-1zM10.400 10h1v1h-1zM10.400 12h1v1h-1z" fill="#fff"/></svg>
<span class="t " style="left:715px;top:280px;letter-spacing:-0.031px;">0918seta.avi</span>
<span class="t " style="left:851px;top:280px;width:44px;text-align:right;letter-spacing:-0.105px;">200.7</span>
<span class="t " style="left:907px;top:280px;letter-spacing:0.010px;">2010-09-23 16:22</span>
<svg style="left:700px;top:294px" width="16" height="16" viewBox="0 0 16 16"><path d="M1.5 14.500V1.500H10.500L12.500 3.500V5" fill="none" stroke="#a8a8a8"/><path d="M10.500 1.500V3.500H12.500" fill="none" stroke="#c0c0c0"/><rect x="3" y="5" width="9" height="9" fill="#4b5a68"/><rect x="5" y="5.600" width="5" height="3" fill="#54b4e8"/><rect x="5" y="8.600" width="5" height="1.300" fill="#8a3a6a"/><rect x="5" y="9.900" width="5" height="3.600" fill="#2e8fdc"/><path d="M3.600 6h1v1h-1zM3.600 8h1v1h-1zM3.600 10h1v1h-1zM3.600 12h1v1h-1zM10.400 6h1v1h-1zM10.400 8h1v1h-1zM10.400 10h1v1h-1zM10.400 12h1v1h-1z" fill="#fff"/></svg>
<span class="t " style="left:715px;top:296px;letter-spacing:-0.225px;">100525 KaktuszKiallitas_...</span>
<span class="t " style="left:851px;top:296px;width:44px;text-align:right;letter-spacing:-0.102px;">90.5</span>
<span class="t " style="left:907px;top:296px;letter-spacing:0.010px;">2010-05-31 22:02</span>
<svg style="left:700px;top:310px" width="16" height="16" viewBox="0 0 16 16"><path d="M1.5 14.500V1.500H10.500L12.500 3.500V5" fill="none" stroke="#a8a8a8"/><path d="M10.500 1.500V3.500H12.500" fill="none" stroke="#c0c0c0"/><rect x="3" y="5" width="9" height="9" fill="#4b5a68"/><rect x="5" y="5.600" width="5" height="3" fill="#54b4e8"/><rect x="5" y="8.600" width="5" height="1.300" fill="#8a3a6a"/><rect x="5" y="9.900" width="5" height="3.600" fill="#2e8fdc"/><path d="M3.600 6h1v1h-1zM3.600 8h1v1h-1zM3.600 10h1v1h-1zM3.600 12h1v1h-1zM10.400 6h1v1h-1zM10.400 8h1v1h-1zM10.400 10h1v1h-1zM10.400 12h1v1h-1z" fill="#fff"/></svg>
<span class="t " style="left:715px;top:312px;letter-spacing:-0.230px;">100608 EgyevesekaSzoci...</span>
<span class="t " style="left:851px;top:312px;width:44px;text-align:right;letter-spacing:-0.102px;">76.6</span>
<span class="t " style="left:907px;top:312px;letter-spacing:0.010px;">2010-06-26 22:01</span>
<svg style="left:700px;top:326px" width="16" height="16" viewBox="0 0 16 16"><path d="M1.5 14.500V1.500H10.500L12.500 3.500V5" fill="none" stroke="#a8a8a8"/><path d="M10.500 1.500V3.500H12.500" fill="none" stroke="#c0c0c0"/><rect x="3" y="5" width="9" height="9" fill="#4b5a68"/><rect x="5" y="5.600" width="5" height="3" fill="#54b4e8"/><rect x="5" y="8.600" width="5" height="1.300" fill="#8a3a6a"/><rect x="5" y="9.900" width="5" height="3.600" fill="#2e8fdc"/><path d="M3.600 6h1v1h-1zM3.600 8h1v1h-1zM3.600 10h1v1h-1zM3.600 12h1v1h-1zM10.400 6h1v1h-1zM10.400 8h1v1h-1zM10.400 10h1v1h-1zM10.400 12h1v1h-1z" fill="#fff"/></svg>
<span class="t " style="left:715px;top:328px;letter-spacing:-0.090px;">100616 NyarVeszelyeiTa...</span>
<span class="t " style="left:851px;top:328px;width:44px;text-align:right;letter-spacing:-0.105px;">221.6</span>
<span class="t " style="left:907px;top:328px;letter-spacing:0.010px;">2010-07-05 08:41</span>
<svg style="left:700px;top:342px" width="16" height="16" viewBox="0 0 16 16"><path d="M1.5 14.500V1.500H10.500L12.500 3.500V5" fill="none" stroke="#a8a8a8"/><path d="M10.500 1.500V3.500H12.500" fill="none" stroke="#c0c0c0"/><rect x="3" y="5" width="9" height="9" fill="#4b5a68"/><rect x="5" y="5.600" width="5" height="3" fill="#54b4e8"/><rect x="5" y="8.600" width="5" height="1.300" fill="#8a3a6a"/><rect x="5" y="9.900" width="5" height="3.600" fill="#2e8fdc"/><path d="M3.600 6h1v1h-1zM3.600 8h1v1h-1zM3.600 10h1v1h-1zM3.600 12h1v1h-1zM10.400 6h1v1h-1zM10.400 8h1v1h-1zM10.400 10h1v1h-1zM10.400 12h1v1h-1z" fill="#fff"/></svg>
<span class="t " style="left:715px;top:344px;letter-spacing:-0.312px;">100702Hp_Kesz_Birkozok...</span>
<span class="t " style="left:851px;top:344px;width:44px;text-align:right;letter-spacing:-0.105px;">485.4</span>
<span class="t " style="left:907px;top:344px;letter-spacing:0.010px;">2010-07-03 07:36</span>
<svg style="left:700px;top:358px" width="16" height="16" viewBox="0 0 16 16"><path d="M1.5 14.500V1.500H10.500L12.500 3.500V5" fill="none" stroke="#a8a8a8"/><path d="M10.500 1.500V3.500H12.500" fill="none" stroke="#c0c0c0"/><rect x="3" y="5" width="9" height="9" fill="#4b5a68"/><rect x="5" y="5.600" width="5" height="3" fill="#54b4e8"/><rect x="5" y="8.600" width="5" height="1.300" fill="#8a3a6a"/><rect x="5" y="9.900" width="5" height="3.600" fill="#2e8fdc"/><path d="M3.600 6h1v1h-1zM3.600 8h1v1h-1zM3.600 10h1v1h-1zM3.600 12h1v1h-1zM10.400 6h1v1h-1zM10.400 8h1v1h-1zM10.400 10h1v1h-1zM10.400 12h1v1h-1z" fill="#fff"/></svg>
<span class="t " style="left:715px;top:360px;letter-spacing:-0.200px;">1percMOV.mov</span>
<span class="t " style="left:851px;top:360px;width:44px;text-align:right;letter-spacing:-0.105px;">217.0</span>
<span class="t " style="left:907px;top:360px;letter-spacing:0.010px;">2010-01-12 08:20</span>
<svg style="left:700px;top:374px" width="16" height="16" viewBox="0 0 16 16"><path d="M1.5 14.500V1.500H10.500L12.500 3.500V5" fill="none" stroke="#a8a8a8"/><path d="M10.500 1.500V3.500H12.500" fill="none" stroke="#c0c0c0"/><rect x="3" y="5" width="9" height="9" fill="#4b5a68"/><rect x="5" y="5.600" width="5" height="3" fill="#54b4e8"/><rect x="5" y="8.600" width="5" height="1.300" fill="#8a3a6a"/><rect x="5" y="9.900" width="5" height="3.600" fill="#2e8fdc"/><path d="M3.600 6h1v1h-1zM3.600 8h1v1h-1zM3.600 10h1v1h-1zM3.600 12h1v1h-1zM10.400 6h1v1h-1zM10.400 8h1v1h-1zM10.400 10h1v1h-1zM10.400 12h1v1h-1z" fill="#fff"/></svg>
<span class="t " style="left:715px;top:376px;letter-spacing:-0.073px;">2008.avi</span>
<span class="t " style="left:851px;top:376px;width:44px;text-align:right;letter-spacing:-0.105px;">265.6</span>
<span class="t " style="left:907px;top:376px;letter-spacing:0.010px;">2008-01-10 10:02</span>
<svg style="left:700px;top:390px" width="16" height="16" viewBox="0 0 16 16"><path d="M1.5 14.500V1.500H10.500L12.500 3.500V5" fill="none" stroke="#a8a8a8"/><path d="M10.500 1.500V3.500H12.500" fill="none" stroke="#c0c0c0"/><rect x="3" y="5" width="9" height="9" fill="#4b5a68"/><rect x="5" y="5.600" width="5" height="3" fill="#54b4e8"/><rect x="5" y="8.600" width="5" height="1.300" fill="#8a3a6a"/><rect x="5" y="9.900" width="5" height="3.600" fill="#2e8fdc"/><path d="M3.600 6h1v1h-1zM3.600 8h1v1h-1zM3.600 10h1v1h-1zM3.600 12h1v1h-1zM10.400 6h1v1h-1zM10.400 8h1v1h-1zM10.400 10h1v1h-1zM10.400 12h1v1h-1z" fill="#fff"/></svg>
<span class="t " style="left:715px;top:392px;letter-spacing:-0.209px;">2VTS_01_4 - Copy.mpg</span>
<span class="t " style="left:851px;top:392px;width:44px;text-align:right;letter-spacing:-0.105px;">975.4</span>
<span class="t " style="left:907px;top:392px;letter-spacing:0.010px;">2008-07-15 19:28</span>
<svg style="left:700px;top:406px" width="16" height="16" viewBox="0 0 16 16"><path d="M1.5 14.500V1.500H10.500L12.500 3.500V5" fill="none" stroke="#a8a8a8"/><path d="M10.500 1.500V3.500H12.500" fill="none" stroke="#c0c0c0"/><rect x="3" y="5" width="9" height="9" fill="#4b5a68"/><rect x="5" y="5.600" width="5" height="3" fill="#54b4e8"/><rect x="5" y="8.600" width="5" height="1.300" fill="#8a3a6a"/><rect x="5" y="9.900" width="5" height="3.600" fill="#2e8fdc"/><path d="M3.600 6h1v1h-1zM3.600 8h1v1h-1zM3.600 10h1v1h-1zM3.600 12h1v1h-1zM10.400 6h1v1h-1zM10.400 8h1v1h-1zM10.400 10h1v1h-1zM10.400 12h1v1h-1z" fill="#fff"/></svg>
<span class="t " style="left:715px;top:408px;letter-spacing:-0.414px;">2VTS_01_4.VOB</span>
<span class="t " style="left:851px;top:408px;width:44px;text-align:right;letter-spacing:-0.105px;">975.4</span>
<span class="t " style="left:907px;top:408px;letter-spacing:0.010px;">2008-07-15 19:28</span>
<svg style="left:700px;top:422px" width="16" height="16" viewBox="0 0 16 16"><path d="M1.5 14.500V1.500H10.500L12.500 3.500V5" fill="none" stroke="#a8a8a8"/><path d="M10.500 1.500V3.500H12.500" fill="none" stroke="#c0c0c0"/><rect x="3" y="5" width="9" height="9" fill="#4b5a68"/><rect x="5" y="5.600" width="5" height="3" fill="#54b4e8"/><rect x="5" y="8.600" width="5" height="1.300" fill="#8a3a6a"/><rect x="5" y="9.900" width="5" height="3.600" fill="#2e8fdc"/><path d="M3.600 6h1v1h-1zM3.600 8h1v1h-1zM3.600 10h1v1h-1zM3.600 12h1v1h-1zM10.400 6h1v1h-1zM10.400 8h1v1h-1zM10.400 10h1v1h-1zM10.400 12h1v1h-1z" fill="#fff"/></svg>
<span class="t " style="left:715px;top:424px;letter-spacing:-0.047px;">a.avi</span>
<span class="t " style="left:851px;top:424px;width:44px;text-align:right;letter-spacing:-0.105px;">162.4</span>
<span class="t " style="left:907px;top:424px;letter-spacing:0.010px;">2010-06-12 16:26</span>
<svg style="left:700px;top:438px" width="16" height="16" viewBox="0 0 16 16"><path d="M1.5 14.500V1.500H10.500L12.500 3.500V5" fill="none" stroke="#a8a8a8"/><path d="M10.500 1.500V3.500H12.500" fill="none" stroke="#c0c0c0"/><rect x="3" y="5" width="9" height="9" fill="#4b5a68"/><rect x="5" y="5.600" width="5" height="3" fill="#54b4e8"/><rect x="5" y="8.600" width="5" height="1.300" fill="#8a3a6a"/><rect x="5" y="9.900" width="5" height="3.600" fill="#2e8fdc"/><path d="M3.600 6h1v1h-1zM3.600 8h1v1h-1zM3.600 10h1v1h-1zM3.600 12h1v1h-1zM10.400 6h1v1h-1zM10.400 8h1v1h-1zM10.400 10h1v1h-1zM10.400 12h1v1h-1z" fill="#fff"/></svg>
<span class="t " style="left:715px;top:440px;letter-spacing:-0.037px;">adasreszlet_microsoftdv....</span>
<span class="t " style="left:851px;top:440px;width:44px;text-align:right;letter-spacing:-0.105px;">587.9</span>
<span class="t " style="left:907px;top:440px;letter-spacing:0.010px;">2010-04-23 10:13</span>
<svg style="left:700px;top:454px" width="16" height="16" viewBox="0 0 16 16"><path d="M1.5 14.500V1.500H10.500L12.500 3.500V5" fill="none" stroke="#a8a8a8"/><path d="M10.500 1.500V3.500H12.500" fill="none" stroke="#c0c0c0"/><rect x="3" y="5" width="9" height="9" fill="#4b5a68"/><rect x="5" y="5.600" width="5" height="3" fill="#54b4e8"/><rect x="5" y="8.600" width="5" height="1.300" fill="#8a3a6a"/><rect x="5" y="9.900" width="5" height="3.600" fill="#2e8fdc"/><path d="M3.600 6h1v1h-1zM3.600 8h1v1h-1zM3.600 10h1v1h-1zM3.600 12h1v1h-1zM10.400 6h1v1h-1zM10.400 8h1v1h-1zM10.400 10h1v1h-1zM10.400 12h1v1h-1z" fill="#fff"/></svg>
<span class="t " style="left:715px;top:456px;letter-spacing:0.016px;">adasreszlet_rtx.avi</span>
<span class="t " style="left:851px;top:456px;width:44px;text-align:right;letter-spacing:-0.105px;">588.6</span>
<span class="t " style="left:907px;top:456px;letter-spacing:0.061px;">2010-04-23 10:11</span>
<svg style="left:700px;top:470px" width="16" height="16" viewBox="0 0 16 16"><path d="M1.5 14.500V1.500H10.500L12.500 3.500V5" fill="none" stroke="#a8a8a8"/><path d="M10.500 1.500V3.500H12.500" fill="none" stroke="#c0c0c0"/><rect x="3" y="5" width="9" height="9" fill="#4b5a68"/><rect x="5" y="5.600" width="5" height="3" fill="#54b4e8"/><rect x="5" y="8.600" width="5" height="1.300" fill="#8a3a6a"/><rect x="5" y="9.900" width="5" height="3.600" fill="#2e8fdc"/><path d="M3.600 6h1v1h-1zM3.600 8h1v1h-1zM3.600 10h1v1h-1zM3.600 12h1v1h-1zM10.400 6h1v1h-1zM10.400 8h1v1h-1zM10.400 10h1v1h-1zM10.400 12h1v1h-1z" fill="#fff"/></svg>
<span class="t " style="left:715px;top:472px;letter-spacing:-0.214px;">admatis.mov</span>
<span class="t " style="left:851px;top:472px;width:44px;text-align:right;letter-spacing:-0.105px;">484.9</span>
<span class="t " style="left:907px;top:472px;letter-spacing:0.061px;">2010-02-11 09:29</span>
<svg style="left:700px;top:486px" width="16" height="16" viewBox="0 0 16 16"><path d="M1.5 14.500V1.500H10.500L12.500 3.500V5" fill="none" stroke="#a8a8a8"/><path d="M10.500 1.500V3.500H12.500" fill="none" stroke="#c0c0c0"/><rect x="3" y="5" width="9" height="9" fill="#4b5a68"/><rect x="5" y="5.600" width="5" height="3" fill="#54b4e8"/><rect x="5" y="8.600" width="5" height="1.300" fill="#8a3a6a"/><rect x="5" y="9.900" width="5" height="3.600" fill="#2e8fdc"/><path d="M3.600 6h1v1h-1zM3.600 8h1v1h-1zM3.600 10h1v1h-1zM3.600 12h1v1h-1zM10.400 6h1v1h-1zM10.400 8h1v1h-1zM10.400 10h1v1h-1zM10.400 12h1v1h-1z" fill="#fff"/></svg>
<span class="t " style="left:715px;top:488px;letter-spacing:-0.127px;">Adás 9.14.avi</span>
<span class="t " style="left:851px;top:488px;width:44px;text-align:right;letter-spacing:-0.107px;">2171.2</span>
<span class="t " style="left:907px;top:488px;letter-spacing:0.010px;">2009-09-15 06:56</span>
<svg style="left:700px;top:502px" width="16" height="16" viewBox="0 0 16 16"><path d="M1.5 14.500V1.500H10.500L12.500 3.500V5" fill="none" stroke="#a8a8a8"/><path d="M10.500 1.500V3.500H12.500" fill="none" stroke="#c0c0c0"/><rect x="3" y="5" width="9" height="9" fill="#4b5a68"/><rect x="5" y="5.600" width="5" height="3" fill="#54b4e8"/><rect x="5" y="8.600" width="5" height="1.300" fill="#8a3a6a"/><rect x="5" y="9.900" width="5" height="3.600" fill="#2e8fdc"/><path d="M3.600 6h1v1h-1zM3.600 8h1v1h-1zM3.600 10h1v1h-1zM3.600 12h1v1h-1zM10.400 6h1v1h-1zM10.400 8h1v1h-1zM10.400 10h1v1h-1zM10.400 12h1v1h-1z" fill="#fff"/></svg>
<span class="t " style="left:715px;top:504px;letter-spacing:-0.121px;">anci_2009_szor.avi</span>
<span class="t " style="left:851px;top:504px;width:44px;text-align:right;letter-spacing:-0.105px;">109.4</span>
<span class="t " style="left:907px;top:504px;letter-spacing:0.010px;">2010-05-05 07:49</span>
<svg style="left:700px;top:518px" width="16" height="16" viewBox="0 0 16 16"><path d="M1.5 14.500V1.500H10.500L12.500 3.500V5" fill="none" stroke="#a8a8a8"/><path d="M10.500 1.500V3.500H12.500" fill="none" stroke="#c0c0c0"/><rect x="3" y="5" width="9" height="9" fill="#4b5a68"/><rect x="5" y="5.600" width="5" height="3" fill="#54b4e8"/><rect x="5" y="8.600" width="5" height="1.300" fill="#8a3a6a"/><rect x="5" y="9.900" width="5" height="3.600" fill="#2e8fdc"/><path d="M3.600 6h1v1h-1zM3.600 8h1v1h-1zM3.600 10h1v1h-1zM3.600 12h1v1h-1zM10.400 6h1v1h-1zM10.400 8h1v1h-1zM10.400 10h1v1h-1zM10.400 12h1v1h-1z" fill="#fff"/></svg>
<span class="t " style="left:715px;top:520px;letter-spacing:-0.100px;">anci_jade_2009.avi</span>
<span class="t " style="left:851px;top:520px;width:44px;text-align:right;letter-spacing:-0.102px;">44.7</span>
<span class="t " style="left:907px;top:520px;letter-spacing:0.010px;">2010-02-06 12:18</span>
<svg style="left:700px;top:534px" width="16" height="16" viewBox="0 0 16 16"><path d="M1.5 14.500V1.500H10.500L12.500 3.500V5" fill="none" stroke="#a8a8a8"/><path d="M10.500 1.500V3.500H12.500" fill="none" stroke="#c0c0c0"/><rect x="3" y="5" width="9" height="9" fill="#4b5a68"/><rect x="5" y="5.600" width="5" height="3" fill="#54b4e8"/><rect x="5" y="8.600" width="5" height="1.300" fill="#8a3a6a"/><rect x="5" y="9.900" width="5" height="3.600" fill="#2e8fdc"/><path d="M3.600 6h1v1h-1zM3.600 8h1v1h-1zM3.600 10h1v1h-1zM3.600 12h1v1h-1zM10.400 6h1v1h-1zM10.400 8h1v1h-1zM10.400 10h1v1h-1zM10.400 12h1v1h-1z" fill="#fff"/></svg>
<span class="t " style="left:715px;top:536px;letter-spacing:-0.147px;">ANIM.gif</span>
<span class="t " style="left:851px;top:536px;width:44px;text-align:right;letter-spacing:-0.097px;">0.7</span>
<span class="t " style="left:907px;top:536px;letter-spacing:0.061px;">2011-03-05 10:41</span>
<svg style="left:700px;top:550px" width="16" height="16" viewBox="0 0 16 16"><path d="M1.5 14.500V1.500H10.500L12.500 3.500V5" fill="none" stroke="#a8a8a8"/><path d="M10.500 1.500V3.500H12.500" fill="none" stroke="#c0c0c0"/><rect x="3" y="5" width="9" height="9" fill="#4b5a68"/><rect x="5" y="5.600" width="5" height="3" fill="#54b4e8"/><rect x="5" y="8.600" width="5" height="1.300" fill="#8a3a6a"/><rect x="5" y="9.900" width="5" height="3.600" fill="#2e8fdc"/><path d="M3.600 6h1v1h-1zM3.600 8h1v1h-1zM3.600 10h1v1h-1zM3.600 12h1v1h-1zM10.400 6h1v1h-1zM10.400 8h1v1h-1zM10.400 10h1v1h-1zM10.400 12h1v1h-1z" fill="#fff"/></svg>
<span class="t " style="left:715px;top:552px;letter-spacing:-0.109px;">aquarell1_2009.avi</span>
<span class="t " style="left:851px;top:552px;width:44px;text-align:right;letter-spacing:-0.105px;">104.3</span>
<span class="t " style="left:907px;top:552px;letter-spacing:0.061px;">2010-05-03 11:46</span>
<svg style="left:700px;top:566px" width="16" height="16" viewBox="0 0 16 16"><path d="M1.5 14.500V1.500H10.500L12.500 3.500V5" fill="none" stroke="#a8a8a8"/><path d="M10.500 1.500V3.500H12.500" fill="none" stroke="#c0c0c0"/><rect x="3" y="5" width="9" height="9" fill="#4b5a68"/><rect x="5" y="5.600" width="5" height="3" fill="#54b4e8"/><rect x="5" y="8.600" width="5" height="1.300" fill="#8a3a6a"/><rect x="5" y="9.900" width="5" height="3.600" fill="#2e8fdc"/><path d="M3.600 6h1v1h-1zM3.600 8h1v1h-1zM3.600 10h1v1h-1zM3.600 12h1v1h-1zM10.400 6h1v1h-1zM10.400 8h1v1h-1zM10.400 10h1v1h-1zM10.400 12h1v1h-1z" fill="#fff"/></svg>
<span class="t " style="left:715px;top:568px;letter-spacing:-0.205px;">bav reklamm.avi</span>
<span class="t " style="left:851px;top:568px;width:44px;text-align:right;letter-spacing:-0.105px;">105.6</span>
<span class="t " style="left:907px;top:568px;letter-spacing:0.010px;">2010-05-07 07:45</span>
<svg style="left:700px;top:582px" width="16" height="3" viewBox="0 0 16 3"><path d="M1.5 3V1.5H10.5L12 3" fill="none" stroke="#a8a8a8"/></svg>
<div class="" style="left:716px;top:584px;width:2px;height:1px;background:#555"></div>
<div class="" style="left:722px;top:584px;width:1px;height:1px;background:#555"></div>
<div class="" style="left:728px;top:584px;width:1px;height:1px;background:#555"></div>
<div class="" style="left:1021px;top:211px;width:16px;height:375px;background:#f0f0f0"></div>
<svg style="left:1025px;top:217px" width="9" height="6" viewBox="0 0 9 6"><path d="M0.5 5.5L4.5 1L8.5 5.5z" fill="#404040"/></svg>
<svg style="left:1025px;top:575px" width="9" height="6" viewBox="0 0 9 6"><path d="M1 0.5L4.5 4.5L8 0.5z" fill="#404040"/></svg>
<div class="" style="left:1021px;top:229px;width:15px;height:118px;border:1px solid #979797;border-radius:2px;background:linear-gradient(90deg,#f6f6f6 0,#e8e8e8 45%,#d4d4d4 55%,#dadada 100%);box-shadow:inset 0 0 0 1px rgba(255,255,255,.6)"></div>
<div class="" style="left:1025px;top:284px;width:8px;height:1px;background:#606060"></div>
<div class="" style="left:1025px;top:286px;width:8px;height:1px;background:#606060"></div>
<div class="" style="left:1025px;top:288px;width:8px;height:1px;background:#606060"></div>
<div class="" style="left:1025px;top:290px;width:8px;height:1px;background:#606060"></div>
<div class="" style="left:679px;top:592px;width:111px;height:20px;background:#c0c0c0"></div>
<div class="" style="left:684px;top:611px;width:31px;height:6px;background:#c0c0c0"></div>
<div class="" style="left:718px;top:611px;width:31px;height:6px;background:#c0c0c0"></div>
<div class="" style="left:755px;top:611px;width:31px;height:6px;background:#c0c0c0"></div>
<span class="t" style="left:685px;top:591px;font-weight:bold;font-style:italic;font-size:22px;line-height:20px;height:20px;color:#00007a;letter-spacing:3.3px;word-spacing:-5.9px;transform-origin:0 0;transform:scale(1,1.33)">20 00 53</span>
<div class="btn" style="left:964px;top:596px;width:75px;height:23px;line-height:20px;letter-spacing:-0.947px;">OK</div>
</body></html>
